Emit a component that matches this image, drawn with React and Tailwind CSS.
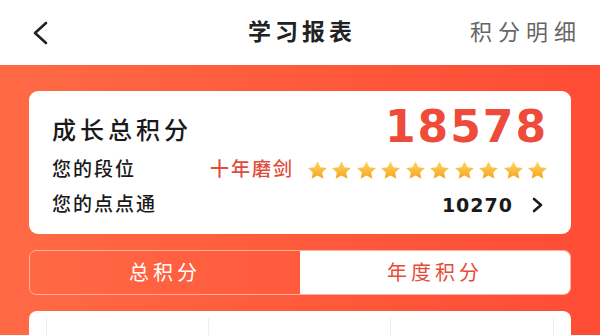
import React from 'react';

const cjk = { fontFamily: '"Liberation Sans", "Noto Sans CJK SC", sans-serif' };

const Star = () => (
  <svg width="21" height="18" viewBox="0 0 24 22" className="shrink-0">
    <defs>
      <linearGradient id="sg" x1="0" y1="0" x2="0" y2="1">
        <stop offset="0%" stopColor="#ffd75e" />
        <stop offset="100%" stopColor="#f4a421" />
      </linearGradient>
    </defs>
    <path d="M12 0.5l3.6 7.1 7.9 1.1-5.8 5.3 1.5 7.6-7.2-3.8-7.2 3.8 1.5-7.6-5.8-5.3 7.9-1.1z" fill="url(#sg)" />
  </svg>
);

const App = () => {
  return (
    <div className="w-[600px] h-[335px] overflow-hidden bg-white" style={cjk}>
      <div className="h-[65px] grid grid-cols-3 items-center px-[28px] bg-white">
        <svg width="20" height="26" viewBox="0 0 20 26" className="ml-[2px]">
          <path d="M16 3L5 13l11 10" fill="none" stroke="#222" strokeWidth="2.6" strokeLinecap="round" strokeLinejoin="round" />
        </svg>
        <div className="text-center text-[23px] font-bold tracking-[4px] text-[#222] pl-[4px]">学习报表</div>
        <div className="text-right text-[22px] tracking-[6px] text-[#666] -mr-[10px]">积分明细</div>
      </div>

      <div className="h-[270px] bg-gradient-to-r from-[#ff6a45] via-[#ff5a3c] to-[#ff4c35] px-[29px] pt-[26px]">
        <div className="bg-white rounded-[9px] h-[143px] px-[23px] pt-[18px]">
          <div className="flex items-center justify-between h-[36px]">
            <span className="text-[24px] font-medium tracking-[4px] text-[#1a1a1a] mt-[8px]">成长总积分</span>
            <span className="text-[44px] font-bold tracking-[2px] text-[#ee4b3b] leading-none" style={{ fontFamily: '"DejaVu Sans", sans-serif' }}>18578</span>
          </div>
          <div className="flex items-center mt-[11px] h-[28px]">
            <span className="w-[158px] text-[19px] font-medium tracking-[2px] text-[#1a1a1a]">您的段位</span>
            <span className="text-[19px] font-medium tracking-[2px] text-[#e24a3a]">十年磨剑</span>
            <div className="ml-auto flex gap-[3.5px]">
              {Array.from({ length: 10 }).map((_, i) => (
                <Star key={i} />
              ))}
            </div>
          </div>
          <div className="flex items-center mt-[7px] h-[28px]">
            <span className="text-[19px] font-medium tracking-[2px] text-[#1a1a1a]">您的点点通</span>
            <span className="ml-auto text-[19px] font-bold tracking-[1px] text-[#1a1a1a]" style={{ fontFamily: '"DejaVu Sans", sans-serif' }}>10270</span>
            <svg width="14" height="16" viewBox="0 0 14 16" className="ml-[18px] mr-[3px]">
              <path d="M3 2l7 6-7 6" fill="none" stroke="#1a1a1a" strokeWidth="2.6" strokeLinecap="round" strokeLinejoin="round" />
            </svg>
          </div>
        </div>

        <div className="mt-[16px] h-[45px] flex rounded-[7px] overflow-hidden border border-[#ffb19c]">
          <div className="flex-1 flex items-center justify-center text-[20px] tracking-[4px] text-white">总积分</div>
          <div className="flex-1 flex items-center justify-center bg-white text-[20px] tracking-[4px] text-[#e84b38]">年度积分</div>
        </div>

        <div className="mt-[16px] h-[60px] bg-white rounded-t-[8px] pt-[7px] px-[17px]">
          <div className="flex h-full border-l border-r border-[#eeeeee]">
            <div className="w-[162px] border-r border-[#eeeeee]"></div>
            <div className="w-[182px] border-r border-[#eeeeee]"></div>
            <div className="flex-1"></div>
          </div>
        </div>
      </div>
    </div>
  );
};

export default App;
